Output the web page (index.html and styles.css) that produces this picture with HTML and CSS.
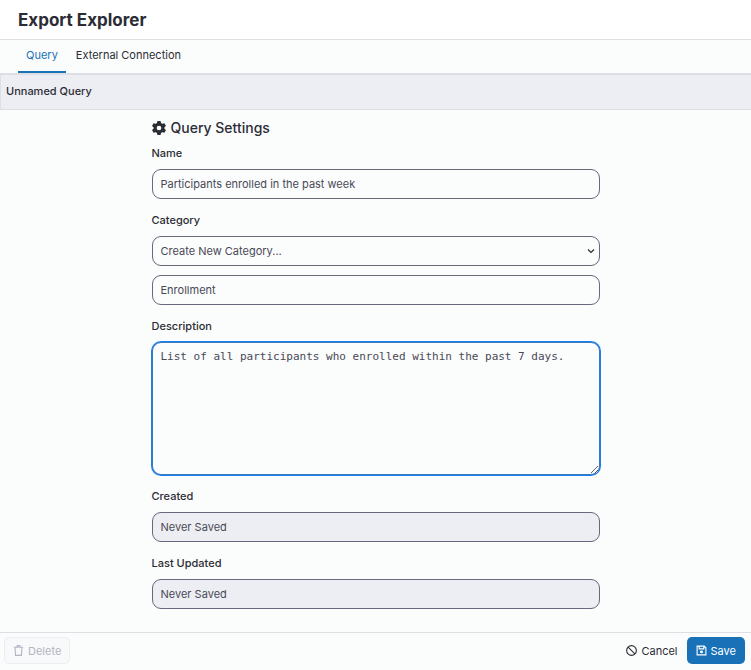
FILE: index.html
```html
<!DOCTYPE html>
<html lang="en">
<head>
    <meta charset="UTF-8">
    <meta name="viewport" content="width=device-width, initial-scale=1.0">
    <title>Export Explorer</title>
    <link rel="stylesheet" href="styles.css">
</head>
<body>
    <header class="page-header">
        <h1>Export Explorer</h1>
    </header>
    <nav class="tabs">
        <a class="tab active" href="#query">Query</a>
        <a class="tab" href="#connection">External Connection</a>
    </nav>
    <div class="query-bar">Unnamed Query</div>

    <main class="content">
        <form class="settings" id="settings-form">
            <h2>
                <svg class="gear" viewBox="0 0 24 24" fill="currentColor" aria-hidden="true">
                    <path fill-rule="evenodd" d="M9.3 0h5.4l.8 3.6 2.3 1.3 3.5-1.1L24 8.5l-2.7 2.4v2.4l2.7 2.3-2.7 4.6-3.5-1-2.3 1.3-.8 3.5H9.3l-.8-3.5-2.3-1.3-3.5 1L0 15.6l2.7-2.3v-2.4L0 8.5l2.7-4.7 3.5 1.1 2.3-1.3zM12 8a4 4 0 1 0 0 8 4 4 0 0 0 0-8z"/>
                </svg>
                Query Settings
            </h2>

            <div class="field">
                <label for="name">Name</label>
                <input type="text" id="name" value="Participants enrolled in the past week">
            </div>

            <div class="field">
                <label for="category">Category</label>
                <div class="select-wrap">
                    <select id="category">
                        <option>Create New Category...</option>
                    </select>
                    <svg class="chevron" viewBox="0 0 8 8" aria-hidden="true">
                        <path d="M1 2.5l3 3 3-3" fill="none" stroke="currentColor" stroke-width="1.2"/>
                    </svg>
                </div>
                <input type="text" id="new-category" value="Enrollment" aria-label="New category">
            </div>

            <div class="field">
                <label for="description">Description</label>
                <textarea id="description" autofocus>List of all participants who enrolled within the past 7 days.</textarea>
            </div>

            <div class="field">
                <label for="created">Created</label>
                <input type="text" id="created" value="Never Saved" disabled>
            </div>

            <div class="field">
                <label for="updated">Last Updated</label>
                <input type="text" id="updated" value="Never Saved" disabled>
            </div>
        </form>
    </main>

    <footer class="actions">
        <button type="button" class="btn btn-delete" disabled>
            <svg viewBox="0 0 12 12" fill="none" stroke="currentColor" stroke-width="1.2" aria-hidden="true">
                <path d="M1 2.5h10M4 2.5l.6-1.8h2.8L8 2.5M2.2 2.5l.6 8.8h6.4l.6-8.8"/>
            </svg>
            Delete
        </button>
        <div class="actions-right">
            <button type="button" class="btn btn-cancel">
                <svg viewBox="0 0 12 12" fill="none" stroke="currentColor" stroke-width="1.2" aria-hidden="true">
                    <circle cx="6" cy="6" r="5.3"/>
                    <path d="M2.3 2.3l7.4 7.4"/>
                </svg>
                Cancel
            </button>
            <button type="submit" form="settings-form" class="btn btn-save">
                <svg viewBox="0 0 12 12" fill="none" stroke="currentColor" stroke-width="1.2" aria-hidden="true">
                    <path d="M1.2 1.2H9l1.8 1.8v7.8H1.2zM3.5 1.2v3h5v-3"/>
                    <circle cx="6" cy="7.5" r="1" fill="currentColor"/>
                </svg>
                Save
            </button>
        </div>
    </footer>

    <script>
        const description = document.getElementById('description');
        description.focus();
        description.setSelectionRange(description.value.length, description.value.length);
    </script>
</body>
</html>
```
FILE: styles.css
```css
* {
    box-sizing: border-box;
}

body {
    margin: 0;
    min-height: 100vh;
    display: flex;
    flex-direction: column;
    font-family: Inter, "Liberation Sans", sans-serif;
    font-size: 11px;
    line-height: 16px;
    color: #2c2c35;
    background: #fbfcfc;
}

.page-header {
    padding: 8px 18px 7px;
    background: #fff;
    border-bottom: 1px solid #dedfe4;
}

h1 {
    margin: 0;
    font-size: 17px;
    font-weight: 700;
    line-height: 24px;
}

.tabs {
    display: flex;
    gap: 2px;
    padding: 0 18px;
    border-bottom: 1px solid #dedfe4;
}

.tab {
    padding: 7px 8px 8px;
    border-bottom: 2px solid transparent;
    color: #2c2c35;
    text-decoration: none;
}

.tab.active {
    color: #1971b8;
    border-color: #1971b8;
}

.query-bar {
    padding: 8px 5px 10px;
    border: 1px solid #dedfe4;
    border-right: none;
    background: #edeef3;
    font-weight: 500;
}

.content {
    flex: 1;
    padding: 8px 16px 23px;
}

.settings {
    max-width: 448px;
    margin: 0 auto;
}

h2 {
    display: flex;
    align-items: center;
    gap: 5px;
    margin: 0 0 7px;
    font-size: 14px;
    font-weight: 500;
    line-height: 20px;
}

.gear {
    width: 14px;
    height: 14px;
}

.field {
    display: flex;
    flex-direction: column;
    margin-bottom: 13px;
}

.field:last-child {
    margin-bottom: 0;
}

.field label {
    margin-bottom: 8px;
    font-weight: 500;
}

input,
select,
textarea {
    display: block;
    width: 100%;
    height: 30px;
    margin: 0;
    padding: 0 8px;
    border: 1px solid #69667e;
    border-radius: 9px;
    background: #fbfcfc;
    color: #494956;
    font: inherit;
}

select {
    appearance: none;
}

input:disabled {
    background: #edeef3;
    color: #494956;
}

.select-wrap {
    position: relative;
    margin-bottom: 9px;
}

.chevron {
    position: absolute;
    right: 5px;
    top: 11px;
    width: 8px;
    height: 8px;
    pointer-events: none;
}

textarea {
    height: 133px;
    padding: 6px 8px;
    font-family: "DejaVu Sans Mono", monospace;
    resize: both;
}

textarea:focus {
    border-color: #3c78bd;
    outline: none;
    box-shadow: 0 0 0 1px #1a7ff0;
}

.actions {
    display: flex;
    justify-content: space-between;
    padding: 4px 6px 6px 4px;
    border-top: 1px solid #dedfe4;
}

.actions-right {
    display: flex;
}

.btn {
    display: flex;
    align-items: center;
    gap: 4px;
    height: 27px;
    padding: 0 8px;
    border: 1px solid transparent;
    border-radius: 5px;
    background: none;
    color: #2c2c35;
    font: inherit;
    cursor: pointer;
}

.btn svg {
    width: 11px;
    height: 11px;
}

.btn-delete {
    border-color: #ededf2;
    background: #f8f9fb;
    color: #b5b4c6;
    cursor: default;
}

.btn-save {
    background: #1971b8;
    color: #fff;
}
```
